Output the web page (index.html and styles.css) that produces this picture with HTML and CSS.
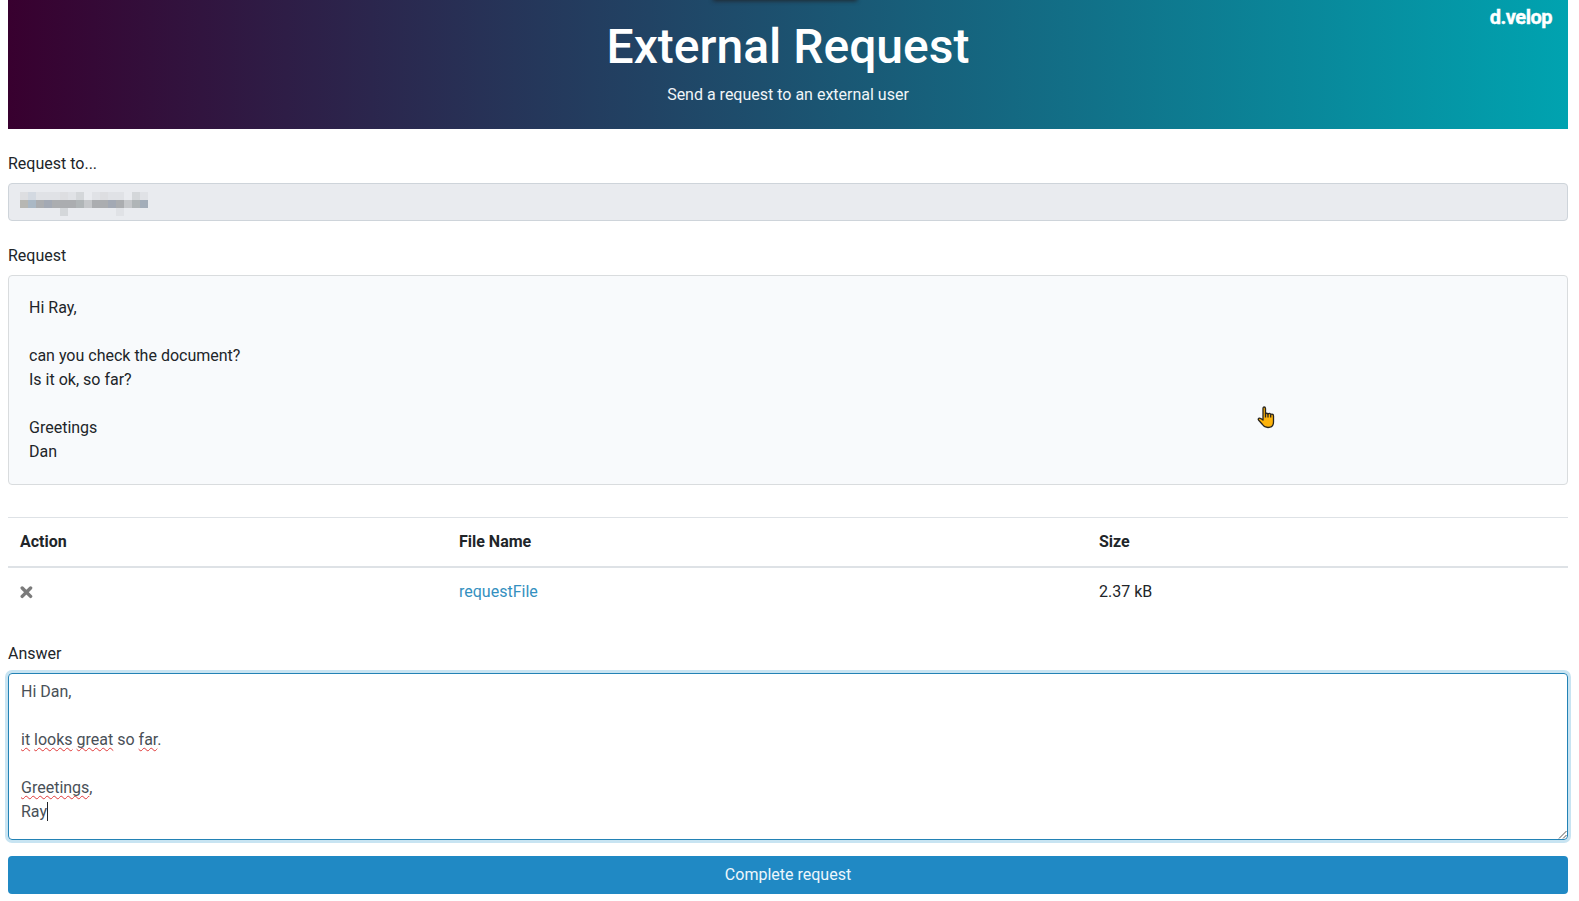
FILE: index.html
```html
<!DOCTYPE html>
<html lang="en">

<head>
    <meta charset="UTF-8">
    <meta name="viewport" content="width=device-width, initial-scale=1.0">
    <title>External Request</title>

    <link rel="stylesheet" href="styles.css">
</head>

<body>
    <header class="banner">
        <div class="tab-shadow"></div>
        <span class="brand">d.velop</span>
        <h1>External Request</h1>
        <p>Send a request to an external user</p>
    </header>

    <main>
        <div class="label">Request to...</div>
        <div class="recipient">
            <!-- Masked mail address -->
            <svg width="128" height="24" viewBox="0 0 16 3" shape-rendering="crispEdges">
                <path fill="#dddee1" d="M0 0h1v1h-1zM5 0h1v1h-1zM10 0h1v1h-1z"/>
                <path fill="#d3d9e1" d="M1 0h1v1h-1z"/>
                <path fill="#e0e2e6" d="M2 0h3v1h-3zM6 0h1v1h-1zM9 0h1v1h-1zM11 0h2v1h-2zM15 0h1v1h-1zM12 2h1v1h-1z"/>
                <path fill="#d4d7da" d="M7 0h1v1h-1zM14 0h1v1h-1zM5 2h1v1h-1z"/>
                <path fill="#b7b7b3" d="M0 1h1v1h-1z"/>
                <path fill="#aab8c5" d="M1 1h1v1h-1z"/>
                <path fill="#abadb0" d="M2 1h1v1h-1zM4 1h3v1h-3zM9 1h2v1h-2zM12 1h1v1h-1z"/>
                <path fill="#a3a9b4" d="M3 1h1v1h-1zM11 1h1v1h-1z"/>
                <path fill="#a3adb9" d="M15 1h1v1h-1z"/>
                <path fill="#b0b5b7" d="M7 1h1v1h-1zM14 1h1v1h-1z"/>
                <path fill="#c5c7ca" d="M8 1h1v1h-1zM13 1h1v1h-1z"/>
            </svg>
        </div>

        <div class="label">Request</div>
        <div class="message">Hi Ray,

can you check the document?
Is it ok, so far?

Greetings
Dan</div>

        <table>
            <thead>
                <tr>
                    <th class="col-action">Action</th>
                    <th class="col-name">File Name</th>
                    <th>Size</th>
                </tr>
            </thead>
            <tbody>
                <tr>
                    <td>
                        <svg class="remove" width="13" height="13" viewBox="0 0 13 13">
                            <path d="M2.2 2l8.400 8.400M10.600 2l-8.400 8.400"/>
                        </svg>
                    </td>
                    <td><a href="#">requestFile</a></td>
                    <td>2.37 kB</td>
                </tr>
            </tbody>
        </table>

        <div class="label">Answer</div>
        <div class="answer">Hi Dan,

<span class="typo">it</span> <span class="typo">looks</span> <span class="typo">great</span> so <span class="typo">far</span>.

<span class="typo">Greetings</span>,
Ray<span class="caret"></span><svg class="grip" width="9" height="9" viewBox="0 0 9 9"><path d="M1 8.500l7.500-7.500M5 8.500l3.500-3.500"/></svg></div>

        <button type="button">Complete request</button>
    </main>

    <svg class="pointer" width="18" height="23" viewBox="0 0 18 23">
        <path d="M6 13.500V2.500Q6 1 7.200 1T8.500 2.500V8Q9.500 6.500 11 8Q12.500 6.700 13.700 8.300Q16.500 7.500 16.500 10V16Q16.500 21.500 11 21.500Q7.500 21.500 5.500 18.500L1.500 14Q.7 12.700 2.200 12.200Q3.500 12 6 14Z"/>
        <path d="M8.500 7.500v4M11 8v3.500M13.700 8.500v3"/>
    </svg>
</body>

</html>
```

FILE: styles.css
```css
* {
    box-sizing: border-box;
}

body {
    font-family: Roboto, "Liberation Sans", sans-serif;
    font-size: 16px;
    line-height: 24px;
    margin: 0;
    padding: 0 11px 0 8px;
    color: #212529;
    background-color: #fff;
    overflow: hidden;
}

.banner {
    position: relative;
    height: 129px;
    padding-top: 18px;
    text-align: center;
    color: white;
    background: linear-gradient(to right, #38002f, #00a3b0);
    overflow: hidden;
}

.banner h1 {
    margin: 0 0 7px;
    font-size: 48px;
    font-weight: 500;
    line-height: 58px;
}

.banner p {
    margin: 0;
    color: #f0f5f8;
}

.brand {
    position: absolute;
    top: 5px;
    right: 16px;
    font-size: 20px;
    font-weight: 700;
    letter-spacing: -0.5px;
    -webkit-text-stroke: 0.4px white;
}

.tab-shadow {
    position: absolute;
    top: -8px;
    left: 706px;
    width: 142px;
    height: 8px;
    box-shadow: 0 0 4px 1px #20272f;
}

main {
    padding-top: 23px;
}

.label {
    margin-bottom: 7px;
}

.recipient {
    height: 38px;
    margin-bottom: 23px;
    padding: 8px 11px;
    border: 1px solid #ced4da;
    border-radius: 4px;
    background-color: #e9ebef;
}

.recipient svg {
    display: block;
}

.message {
    margin-bottom: 32px;
    padding: 20px;
    border: 1px solid #d9dcde;
    border-radius: 4px;
    background-color: #f8fafc;
    white-space: pre-wrap;
}

table {
    width: 100%;
    margin-bottom: 26px;
    border-spacing: 0;
    table-layout: fixed;
}

th,
td {
    height: 48px;
    padding: 12px;
    text-align: left;
}

th {
    height: 51px;
    border-top: 1px solid #dee2e6;
    border-bottom: 2px solid #dee2e6;
}

.col-action {
    width: 439px;
}

.col-name {
    width: 640px;
}

a {
    color: #3490c0;
    text-decoration: none;
}

.remove {
    display: block;
    fill: none;
    stroke: #7b7b7b;
    stroke-width: 3.4;
    stroke-linecap: round;
}

.answer {
    position: relative;
    height: 167px;
    margin-bottom: 16px;
    padding: 6px 12px;
    border: 1px solid #2382b5;
    border-radius: 4px;
    box-shadow: 0 0 0 3px #c8e4f2;
    color: #495057;
    white-space: pre-wrap;
}

/* Spell checker underline */
.typo {
    text-decoration: underline wavy #e03a3a 1.4px;
    text-decoration-skip-ink: none;
    text-underline-offset: 2px;
}

.caret {
    display: inline-block;
    width: 1px;
    height: 19px;
    vertical-align: -4px;
    background-color: #212529;
}

.grip {
    position: absolute;
    right: 0;
    bottom: 0;
    fill: none;
    stroke: #555;
}

button {
    display: block;
    width: 100%;
    height: 38px;
    border: 0;
    border-radius: 4px;
    font: inherit;
    color: #edf7fc;
    background-color: #2089c4;
    cursor: pointer;
}

/* Mouse pointer over the page */
.pointer {
    position: absolute;
    left: 1257px;
    top: 406px;
    fill: #fdb30b;
    stroke: #29251e;
    stroke-width: 1.3;
    stroke-linejoin: round;
}
```
